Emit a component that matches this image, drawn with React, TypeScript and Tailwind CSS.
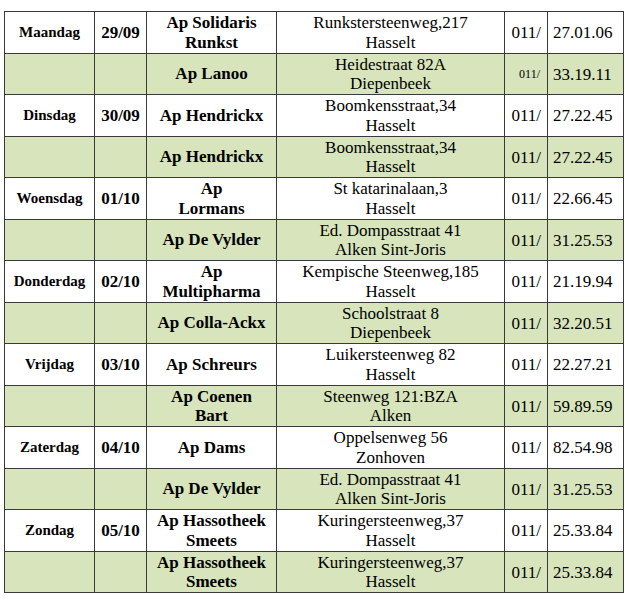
import React from "react";

type Row = {
  day?: string;
  date?: string;
  name: string[];
  addr: string[];
  prefix: string;
  smallPrefix?: boolean;
  num: string;
  green: boolean;
};

const rows: Row[] = [
  { day: "Maandag", date: "29/09", name: ["Ap Solidaris", "Runkst"], addr: ["Runkstersteenweg,217", "Hasselt"], prefix: "011/", num: "27.01.06", green: false },
  { name: ["Ap Lanoo"], addr: ["Heidestraat 82A", "Diepenbeek"], prefix: "011/", smallPrefix: true, num: "33.19.11", green: true },
  { day: "Dinsdag", date: "30/09", name: ["Ap Hendrickx"], addr: ["Boomkensstraat,34", "Hasselt"], prefix: "011/", num: "27.22.45", green: false },
  { name: ["Ap Hendrickx"], addr: ["Boomkensstraat,34", "Hasselt"], prefix: "011/", num: "27.22.45", green: true },
  { day: "Woensdag", date: "01/10", name: ["Ap", "Lormans"], addr: ["St katarinalaan,3", "Hasselt"], prefix: "011/", num: "22.66.45", green: false },
  { name: ["Ap De Vylder"], addr: ["Ed. Dompasstraat 41", "Alken Sint-Joris"], prefix: "011/", num: "31.25.53", green: true },
  { day: "Donderdag", date: "02/10", name: ["Ap", "Multipharma"], addr: ["Kempische Steenweg,185", "Hasselt"], prefix: "011/", num: "21.19.94", green: false },
  { name: ["Ap Colla-Ackx"], addr: ["Schoolstraat 8", "Diepenbeek"], prefix: "011/", num: "32.20.51", green: true },
  { day: "Vrijdag", date: "03/10", name: ["Ap Schreurs"], addr: ["Luikersteenweg 82", "Hasselt"], prefix: "011/", num: "22.27.21", green: false },
  { name: ["Ap Coenen", "Bart"], addr: ["Steenweg 121:BZA", "Alken"], prefix: "011/", num: "59.89.59", green: true },
  { day: "Zaterdag", date: "04/10", name: ["Ap Dams"], addr: ["Oppelsenweg 56", "Zonhoven"], prefix: "011/", num: "82.54.98", green: false },
  { name: ["Ap De Vylder"], addr: ["Ed. Dompasstraat 41", "Alken Sint-Joris"], prefix: "011/", num: "31.25.53", green: true },
  { day: "Zondag", date: "05/10", name: ["Ap Hassotheek", "Smeets"], addr: ["Kuringersteenweg,37", "Hasselt"], prefix: "011/", num: "25.33.84", green: false },
  { name: ["Ap Hassotheek", "Smeets"], addr: ["Kuringersteenweg,37", "Hasselt"], prefix: "011/", num: "25.33.84", green: true },
];

function Lines({ lines }: { lines: string[] }) {
  return (
    <div className="flex flex-col items-center">
      {lines.map((l, i) => (
        <span key={i} className="whitespace-nowrap">
          {l}
        </span>
      ))}
    </div>
  );
}

export default function App() {
  return (
    <div
      className="w-[625px] h-[600px] bg-white pl-[4px] pt-[11px] text-black"
      style={{ fontFamily: '"Liberation Serif", "Times New Roman", serif' }}
    >
      <div className="grid w-[620px] grid-cols-[89px_51px_129px_227px_42px_75px] grid-rows-[repeat(7,41px_40px)] gap-px bg-[#3a3a3a] p-px">
        {rows.map((r, i) => {
          const bg = r.green ? "bg-[#d7e4bc]" : "bg-white";
          return (
            <React.Fragment key={i}>
              <div className={`${bg} flex items-center justify-center text-[15px] font-bold leading-[19px]`}>
                {r.day ?? ""}
              </div>
              <div className={`${bg} flex items-center justify-center text-[17px] font-bold leading-[19px]`}>
                {r.date ?? ""}
              </div>
              <div className={`${bg} flex items-center justify-center text-center text-[17px] font-bold leading-[19.5px]`}>
                <Lines lines={r.name} />
              </div>
              <div className={`${bg} flex items-center justify-center text-center text-[17px] leading-[19.5px]`}>
                <Lines lines={r.addr} />
              </div>
              <div
                className={`${bg} flex items-center justify-end ${
                  r.smallPrefix ? "text-[12px] pr-[7px]" : "text-[17px] pr-[6px]"
                } leading-[19px]`}
              >
                {r.prefix}
              </div>
              <div className={`${bg} flex items-center justify-start pl-[5px] text-[17px] leading-[19px]`}>
                {r.num}
              </div>
            </React.Fragment>
          );
        })}
      </div>
    </div>
  );
}
